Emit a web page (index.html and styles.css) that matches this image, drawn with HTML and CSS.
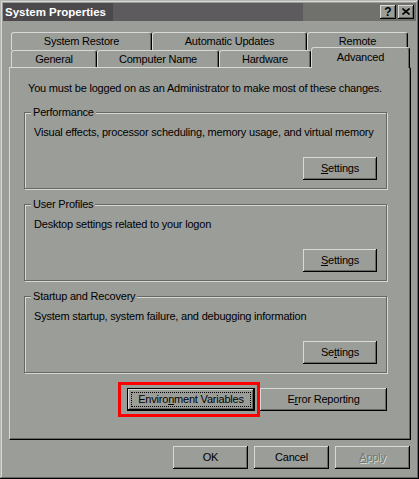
FILE: index.html
```html
<!DOCTYPE html>
<html lang="en">
<head>
  <meta charset="UTF-8">
  <title>System Properties</title>
  <link rel="stylesheet" href="styles.css">
</head>
<body>
  <div class="window">
    <div class="titlebar">
      <span class="title">System Properties</span>
      <div class="caption-buttons">
        <span class="caption-btn help">?</span>
        <span class="caption-btn close">
          <svg width="8" height="7" viewBox="0 0 8 7"><path d="M0.5 0.5L7.5 6.5M7.5 0.5L0.5 6.5" stroke="#000" stroke-width="1.6" fill="none"/></svg>
        </span>
      </div>
    </div>
    <div class="content">
      <div class="tabs">
        <div class="tab-row back">
          <div class="tab tab-restore">System Restore</div>
          <div class="tab tab-updates">Automatic Updates</div>
          <div class="tab tab-remote">Remote</div>
        </div>
        <div class="tab-row front">
          <div class="tab tab-general">General</div>
          <div class="tab tab-computer">Computer Name</div>
          <div class="tab tab-hardware">Hardware</div>
          <div class="tab tab-advanced selected">Advanced</div>
        </div>
      </div>
      <div class="panel">
        <p class="intro">You must be logged on as an Administrator to make most of these changes.</p>
        <div class="group">
          <span class="group-label">Performance</span>
          <div class="group-desc">Visual effects, processor scheduling, memory usage, and virtual memory</div>
          <div class="btn btn-settings"><span><u>S</u>ettings</span></div>
        </div>
        <div class="group">
          <span class="group-label">User Profiles</span>
          <div class="group-desc">Desktop settings related to your logon</div>
          <div class="btn btn-settings"><span><u>S</u>ettings</span></div>
        </div>
        <div class="group">
          <span class="group-label">Startup and Recovery</span>
          <div class="group-desc">System startup, system failure, and debugging information</div>
          <div class="btn btn-settings"><span>Se<u>t</u>tings</span></div>
        </div>
        <div class="panel-actions">
          <div class="highlight">
            <div class="btn btn-wide default"><span>Enviro<u>n</u>ment Variables</span></div>
          </div>
          <div class="btn btn-wide btn-error"><span>E<u>r</u>ror Reporting</span></div>
        </div>
      </div>
      <div class="footer">
        <div class="btn btn-footer"><span>OK</span></div>
        <div class="btn btn-footer"><span>Cancel</span></div>
        <div class="btn btn-footer disabled"><span><u>A</u>pply</span></div>
      </div>
    </div>
  </div>
</body>
</html>
```

FILE: styles.css
```css
:root { --face:#9b9d99; --light:#d8d8d6; --shadow:#666864; --dark:#000; }
*,*::before,*::after{box-sizing:border-box;}
body{margin:0;font-family:"Liberation Sans",Arial,sans-serif;font-size:11px;letter-spacing:-0.2px;color:#000;}

.window{width:419px;height:479px;background:var(--face);padding:3px;
  box-shadow:inset -1px -1px var(--dark),inset 1px 1px #b4b6b2,inset -2px -2px var(--shadow),inset 2px 2px var(--light);}

.titlebar{height:18px;display:flex;align-items:center;justify-content:space-between;padding:0 2px;
  background:linear-gradient(to right,#4b494b 0,#4b494b 110px,#5d5b5d 110px,#5d5b5d 300px,#70716c 300px);}
.title{color:#fff;font-weight:bold;font-size:11.5px;letter-spacing:0;}
.caption-buttons{display:flex;gap:2px;}
.caption-btn{width:16px;height:14px;display:flex;align-items:center;justify-content:center;background:var(--face);
  box-shadow:inset -1px -1px var(--dark),inset 1px 1px var(--light),inset -2px -2px var(--shadow);}
.caption-btn.help{font-weight:bold;font-size:12px;line-height:14px;padding-bottom:1px;letter-spacing:0;}
.caption-btn.close svg{display:block;margin-top:-1px;}

.content{padding:0 5px 0 6px;}

.tabs{margin-top:11px;}
.tab-row{display:flex;padding-left:2px;}
.tab-row.back{height:18px;}
.tab-row.front{height:17px;}
.tab{text-align:center;line-height:13px;border-top:1px solid var(--light);border-left:1px solid var(--light);
  border-right:1px solid var(--dark);border-radius:3px 3px 0 0;box-shadow:inset -1px 0 var(--shadow);background:var(--face);}
.back .tab{height:18px;padding-top:2px;}
.front .tab{height:17px;padding-top:2px;}
.front .tab.selected{position:relative;z-index:1;height:21px;margin-top:-3px;padding-top:3px;}

.tab-restore{width:141px;}
.tab-updates{width:155px;}
.tab-remote{width:101px;}
.tab-general{width:86px;}
.tab-computer{width:122px;}
.tab-hardware{width:92px;}
.tab-advanced{width:99px;}

.panel{height:373px;padding:14px 0 0 14px;border-top:1px solid var(--light);border-left:1px solid var(--light);
  border-right:1px solid var(--dark);border-bottom:1px solid var(--dark);box-shadow:inset -1px -1px var(--shadow);}
.intro{margin:0 0 17px 4px;line-height:13px;}

.group{position:relative;width:363px;height:77px;border:1px solid var(--shadow);
  box-shadow:inset 1px 1px var(--light),1px 1px var(--light);padding:13px 9px 0 9px;display:flex;flex-direction:column;}
.group + .group{margin-top:15px;}
.group-label{position:absolute;top:-7px;left:6px;padding:0 2px;background:var(--face);line-height:13px;}
.group-desc{line-height:13px;white-space:nowrap;}
.group .btn{align-self:flex-end;margin-top:18px;}

.btn{position:relative;display:flex;align-items:center;justify-content:center;height:23px;background:var(--face);line-height:13px;
  box-shadow:inset -1px -1px var(--dark),inset 1px 1px var(--light),inset -2px -2px var(--shadow);}
.btn u{text-underline-offset:1px;}
.btn-settings{width:74px;}
.btn-wide{width:127px;}
.btn-footer{width:75px;}

.btn.default{width:128px;box-shadow:inset 0 0 0 1px var(--dark),inset -2px -2px var(--dark),inset 2px 2px var(--light),inset -3px -3px var(--shadow);}
.btn.default::before{content:"";position:absolute;left:4px;top:4px;right:4px;bottom:4px;border:1px dotted #000;}
.btn.disabled{color:#74766f;text-shadow:1px 1px var(--light);}

.panel-actions{width:363px;display:flex;justify-content:flex-end;gap:5px;margin-top:15px;}
.highlight{position:relative;}
.highlight::after{content:"";position:absolute;left:-9px;top:-6px;width:142px;height:35px;border:3px solid #ff0000;}

.footer{display:flex;justify-content:flex-end;gap:6px;margin-top:6px;padding-right:1px;}
```
